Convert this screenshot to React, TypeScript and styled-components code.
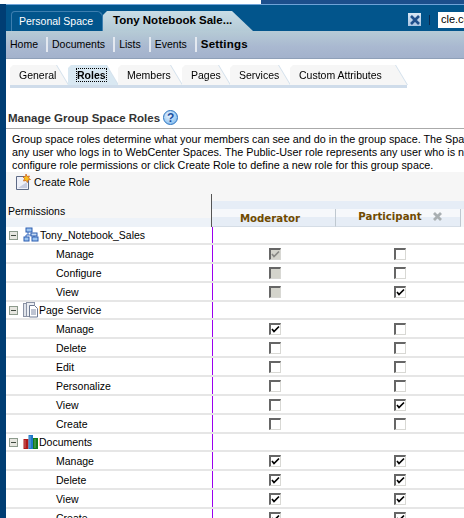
import React from "react";
import styled, { createGlobalStyle } from "styled-components";

const GlobalStyle = createGlobalStyle`
  html, body { margin: 0; padding: 0; background: #fff; }
  body { width: 464px; height: 518px; overflow: hidden; font-family: "Liberation Sans", Arial, sans-serif; font-size: 10.5px; color: #000; }
`;

const font = `"Liberation Sans", Arial, sans-serif`;
const headFont = `"DejaVu Sans", Verdana, sans-serif`;

type Box = "off" | "on" | "lockedOn" | "lockedOff";
type Row = { label: string; group?: "team" | "page" | "docs"; mod?: Box; part?: Box };

const rows: Row[] = [
  { label: "Tony_Notebook_Sales", group: "team" },
  { label: "Manage", mod: "lockedOn", part: "off" },
  { label: "Configure", mod: "lockedOff", part: "off" },
  { label: "View", mod: "lockedOff", part: "on" },
  { label: "Page Service", group: "page" },
  { label: "Manage", mod: "on", part: "off" },
  { label: "Delete", mod: "off", part: "off" },
  { label: "Edit", mod: "off", part: "off" },
  { label: "Personalize", mod: "off", part: "off" },
  { label: "View", mod: "off", part: "on" },
  { label: "Create", mod: "off", part: "off" },
  { label: "Documents", group: "docs" },
  { label: "Manage", mod: "on", part: "on" },
  { label: "Delete", mod: "on", part: "on" },
  { label: "View", mod: "on", part: "on" },
  { label: "Create", mod: "on", part: "on" },
];

const subTabs = [
  { label: "General", width: 58 },
  { label: "Roles", width: 50, active: true },
  { label: "Members", width: 64 },
  { label: "Pages", width: 48 },
  { label: "Services", width: 60 },
  { label: "Custom Attributes", width: 117 },
];

function CheckBox({ state }: { state: Box }) {
  const locked = state === "lockedOn" || state === "lockedOff";
  const checked = state === "on" || state === "lockedOn";
  return (
    <Check $locked={locked}>
      {checked && (
        <svg width="9" height="9" viewBox="0 0 9 9">
          <path d="M1 4l2 2.5L8 1.5" fill="none" stroke={locked ? "#8a8a86" : "#000"} strokeWidth="1.7" />
        </svg>
      )}
    </Check>
  );
}

function GroupIcon({ kind }: { kind: Row["group"] }) {
  if (kind === "team")
    return (
      <svg width="16" height="16" viewBox="0 0 16 16">
        <path d="M5 4v4H3v3M5 8h6v3" fill="none" stroke="#3a6cc0" />
        <rect x="3" y="1" width="6" height="4" fill="#9cc4f0" stroke="#2a5cb0" />
        <rect x="1" y="10" width="5" height="4" fill="#9cc4f0" stroke="#2a5cb0" />
        <rect x="9" y="10" width="6" height="4" fill="#9cc4f0" stroke="#2a5cb0" />
        <rect x="8" y="6" width="6" height="3" fill="#c4daf4" stroke="#2a5cb0" />
      </svg>
    );
  if (kind === "page")
    return (
      <svg width="16" height="16" viewBox="0 0 16 16">
        <rect x="0.5" y="1.5" width="8" height="13" fill="#dfe3ea" stroke="#8b93a5" />
        <rect x="3.5" y="0.5" width="8" height="14" fill="#eceff4" stroke="#8b93a5" />
        <path d="M6.5 3.5h5l3 3v8.500h-8z" fill="#fff" stroke="#6f7a91" />
        <path d="M8 8h5M8 10h5M8 12h5" stroke="#7f8aa5" />
      </svg>
    );
  return (
    <svg width="16" height="16" viewBox="0 0 16 16">
      <rect x="0.500" y="5" width="5" height="10" fill="#b01818" />
      <rect x="5.500" y="1" width="4.500" height="14" fill="#1f78c8" />
      <rect x="10" y="4" width="5" height="11" fill="#0f7a1a" />
      <path d="M2 6v8M7 2v12M12 5v9" stroke="#ffffff" strokeOpacity="0.35" />
    </svg>
  );
}

export default function App() {
  return (
    <>
      <GlobalStyle />
      <TopStrip>
        <TopWhite />
      </TopStrip>
      <Frame>
        <Header>
          <TabRow>
            <DarkTab>Personal Space</DarkTab>
            <ActiveTab>Tony Notebook Sale...</ActiveTab>
          </TabRow>
          <HeaderTools>
            <CloseTool>
              <svg width="12" height="12" viewBox="0 0 12 12">
                <path d="M2 2l8 8M10 2l-8 8" stroke="#1f4f8c" strokeWidth="2.6" />
              </svg>
            </CloseTool>
            <ToolDivider />
            <SearchBox>cle.co</SearchBox>
          </HeaderTools>
        </Header>
        <NavBar>
          <NavItem>Home</NavItem>
          <NavItem>Documents</NavItem>
          <NavItem>Lists</NavItem>
          <NavItem>Events</NavItem>
          <NavItem $last $active>Settings</NavItem>
        </NavBar>
        <SubTabs>
          {subTabs.map((tab) => (
            <SubTabEdge key={tab.label}>
              <SubTab $active={tab.active} $width={tab.width}>
                {tab.active ? <Focus>{tab.label}</Focus> : tab.label}
              </SubTab>
            </SubTabEdge>
          ))}
        </SubTabs>
        <SectionTitle>
          Manage Group Space Roles
          <HelpIcon>?</HelpIcon>
        </SectionTitle>
        <Intro>
          <div>Group space roles determine what your members can see and do in the group space. The Spac</div>
          <div>any user who logs in to WebCenter Spaces. The Public-User role represents any user who is no</div>
          <div>configure role permissions or click Create Role to define a new role for this group space.</div>
        </Intro>
        <Toolbar>
          <svg width="16" height="16" viewBox="0 0 16 16">
            <path d="M1.500 2.500h8l4 4v9h-12z" fill="#eef0f8" stroke="#5d6a86" />
            <path d="M3 14h9V8z" fill="#c5cbe0" />
            <path d="M11 0l1 2.500 2.500 -.5-1 2 2 1.500-2.500.5-.5 2.500-1.500-2-2.500.5 1-2.500-1.500-1.500 2.500-.5z" fill="#f8c020" stroke="#c85810" strokeWidth=".7" />
          </svg>
          <span>Create Role</span>
        </Toolbar>
        <TableHead>
          <HeadLeft>Permissions</HeadLeft>
          <HeadRight>
            <HeadCell>Moderator</HeadCell>
            <HeadCell $raised>
              Participant
              <svg width="11" height="11" viewBox="0 0 11 11">
                <path d="M2 2l7 7M9 2l-7 7" stroke="#a9afb2" strokeWidth="2.800" />
              </svg>
            </HeadCell>
          </HeadRight>
        </TableHead>
        {rows.map((row, i) => (
          <TableRow key={i} $group={!!row.group}>
            <NameCell>
              {row.group ? (
                <>
                  <Expander />
                  <GroupIcon kind={row.group} />
                  <GroupLabel $kind={row.group}>{row.label}</GroupLabel>
                </>
              ) : (
                <Leaf>{row.label}</Leaf>
              )}
            </NameCell>
            <BoxCell>{row.mod && <CheckBox state={row.mod} />}</BoxCell>
            <BoxCell>{row.part && <CheckBox state={row.part} />}</BoxCell>
          </TableRow>
        ))}
      </Frame>
    </>
  );
}

const TopStrip = styled.div`
  height: 4px;
  background: #1c4f8c;
`;

const TopWhite = styled.div`
  width: 261px;
  height: 4px;
  background: #fff;
`;

const Frame = styled.div`
  border-left: 6px solid #003d73;
  height: 514px;
  overflow: hidden;
  font-family: ${font};
  font-size: 10.5px;
`;

const Header = styled.div`
  height: 27px;
  margin-left: -6px;
  display: flex;
  justify-content: space-between;
  border-top: 1px solid #6fa3d8;
  box-sizing: border-box;
  background: #02558c;
`;

const TabRow = styled.div`
  display: flex;
  align-items: flex-end;
  padding-left: 11px;
`;

const DarkTab = styled.div`
  width: 92px;
  height: 20px;
  box-sizing: border-box;
  padding: 3px 0 0 7px;
  color: #fff;
  border: 1px solid #3d7fb0;
  border-bottom: none;
  border-radius: 4px 6px 0 0;
  background: #02558c;
`;

const ActiveTab = styled.div`
  width: 150px;
  height: 20px;
  box-sizing: border-box;
  padding: 3px 0 0 10px;
  font-size: 11.5px;
  font-weight: bold;
  white-space: nowrap;
  color: #000;
  background: linear-gradient(#c9dde6, #b4cad6);
  clip-path: polygon(4px 0, 129px 0, 150px 20px, 0 20px, 0 4px);
`;

const HeaderTools = styled.div`
  display: flex;
  align-items: center;
  gap: 8px;
  padding-top: 3px;
`;

const CloseTool = styled.div`
  width: 13px;
  height: 13px;
  display: flex;
  align-items: center;
  justify-content: center;
  background: linear-gradient(#d8e6f4, #a9c4e2);
`;

const ToolDivider = styled.div`
  width: 1px;
  height: 10px;
  background: #0a2a50;
`;

const SearchBox = styled.div`
  width: 26px;
  height: 16px;
  box-sizing: border-box;
  padding: 1px 0 0 3px;
  font-size: 11px;
  background: #fff;
  color: #000;
  overflow: hidden;
  white-space: nowrap;
`;

const NavBar = styled.div`
  height: 28px;
  display: flex;
  align-items: center;
  background: linear-gradient(#b6cbd6, #a9b8d0 60%, #a3b2cc);
  border-bottom: 1px solid #8fa0b8;
  box-sizing: border-box;
  padding-left: 4px;
`;

const NavItem = styled.div<{ $last?: boolean; $active?: boolean }>`
  padding-right: ${(p) => (p.$last ? 0 : 8)}px;
  margin-right: 4px;
  height: 15px;
  line-height: 15px;
  font-size: ${(p) => (p.$active ? 11.5 : 10.5)}px;
  letter-spacing: ${(p) => (p.$active ? 0.2 : 0)}px;
  font-weight: ${(p) => (p.$active ? "bold" : "normal")};
  border-right: ${(p) => (p.$last ? "none" : "2px solid #e3e8f0")};
`;

const SubTabs = styled.div`
  display: flex;
  margin-top: 6px;
  margin-left: 4px;
  width: 397px;
  height: 23px;
  box-sizing: border-box;
  border-bottom: 3px solid #cfdcea;
`;

const SubTabEdge = styled.div`
  filter: drop-shadow(1px 0 0 #d3e0ec);
`;

const SubTab = styled.div<{ $active?: boolean; $width: number }>`
  width: ${(p) => p.$width}px;
  height: 20px;
  box-sizing: border-box;
  padding: 4px 0 0 9px;
  white-space: nowrap;
  font-weight: ${(p) => (p.$active ? "bold" : "normal")};
  background: ${(p) => (p.$active ? "#d9e8f2" : "#f6f6f6")};
  clip-path: polygon(0 3px, 3px 0, calc(100% - 12px) 0, 100% 100%, 0 100%);
`;

const Focus = styled.span`
  outline: 1px dotted #000;
`;

const SectionTitle = styled.div`
  display: flex;
  align-items: center;
  gap: 3px;
  margin-top: 17px;
  height: 24px;
  box-sizing: border-box;
  padding: 2px 0 0 2px;
  font-size: 11.5px;
  font-weight: bold;
  color: #333;
  border-bottom: 1px solid #aaa;
`;

const HelpIcon = styled.span`
  width: 15px;
  height: 15px;
  border-radius: 50%;
  display: flex;
  align-items: center;
  justify-content: center;
  font-size: 12px;
  color: #1c4fa0;
  background: radial-gradient(circle at 40% 35%, #e8f4ff, #6fb0ea);
  border: 1px solid #2a73c0;
  box-sizing: border-box;
`;

const Intro = styled.div`
  padding: 4px 0 0 6px;
  font-size: 10.8px;
  line-height: 13px;
  white-space: nowrap;
  overflow: hidden;
`;

const Toolbar = styled.div`
  display: flex;
  align-items: center;
  gap: 3px;
  height: 22px;
  padding: 0 0 2px 9px;
  box-sizing: border-box;
  background: #f6f6f6;
`;

const TableHead = styled.div`
  display: flex;
  height: 33px;
`;

const HeadLeft = styled.div`
  width: 206px;
  box-sizing: border-box;
  padding: 11px 0 0 2px;
  height: 33px;
  background: linear-gradient(#f6f6f6 24px, #edf2f8 24px);
  border-right: 1px solid #555;
`;

const HeadRight = styled.div`
  flex: 1;
  display: flex;
  align-items: flex-end;
  height: 33px;
  background: linear-gradient(#f6f6f6 7px, #e6edf6 7px, #e6edf6 15px, #f4f6f9 15px);
`;

const HeadCell = styled.div<{ $raised?: boolean }>`
  width: ${(p) => (p.$raised ? 125 : 124)}px;
  height: 18px;
  box-sizing: border-box;
  display: flex;
  align-items: center;
  justify-content: center;
  gap: 10px;
  padding: ${(p) => (p.$raised ? "0 0 2px 5px" : "1px 7px 0 0")};
  font-family: ${headFont};
  font-size: 10.2px;
  font-weight: bold;
  color: #704a00;
  background: linear-gradient(#f6f8fb 8px, #e6edf6 8px);
  border-right: 1px solid #bfc8d0;
  border-bottom: 1px solid #d5dde6;
`;

const TableRow = styled.div<{ $group: boolean }>`
  display: grid;
  grid-template-columns: 207px 124px 125px;
  height: ${(p) => (p.$group ? 18 : 19)}px;
  box-sizing: border-box;
  border-bottom: 2px solid #e6e6e6;
`;

const NameCell = styled.div`
  display: flex;
  align-items: center;
  border-right: 1px solid #9a00ee;
  box-sizing: border-box;
`;

const Expander = styled.span`
  position: relative;
  width: 9px;
  height: 9px;
  box-sizing: border-box;
  margin: 0 5px 0 3px;
  border: 1px solid #8c9a8c;
  background: #e6e6e0;

  &::after {
    content: "";
    position: absolute;
    left: 1px;
    top: 3px;
    width: 5px;
    height: 1px;
    background: #3f4a3f;
  }
`;

const GroupLabel = styled.span<{ $kind?: Row["group"] }>`
  margin-left: ${(p) => (p.$kind === "team" ? 1 : 0)}px;
`;

const Leaf = styled.span`
  padding-left: 50px;
`;

const BoxCell = styled.div`
  display: flex;
  align-items: center;
  justify-content: center;
`;

const Check = styled.span<{ $locked: boolean }>`
  width: 12px;
  height: 12px;
  box-sizing: border-box;
  display: flex;
  align-items: center;
  justify-content: center;
  background: ${(p) => (p.$locked ? "#d4d4cc" : "#fff")};
  border: 1px solid #d8d8d4;
  border-top: 2px solid #666;
  border-left: 2px solid #666;
`;
